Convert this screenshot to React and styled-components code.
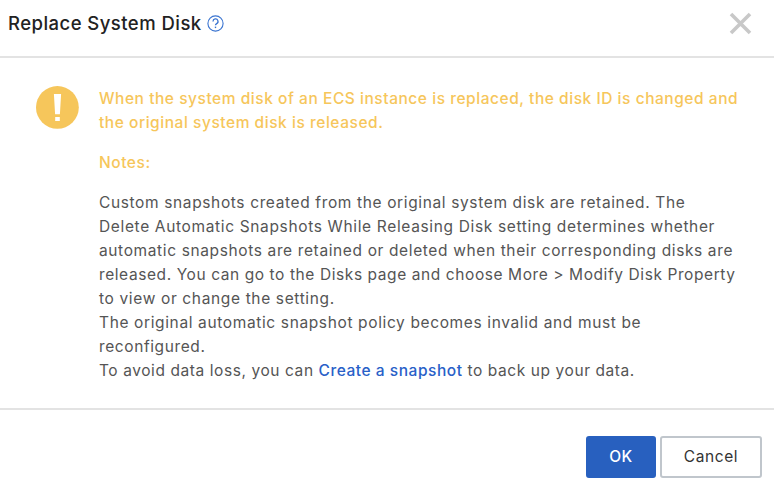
import React from "react";
import styled, { createGlobalStyle } from "styled-components";

const GlobalStyle = createGlobalStyle`
  * { box-sizing: border-box; }
  body { margin: 0; background: #fff; }
`;
const Dialog = styled.section`
  width: 774px;
  height: 500px;
  display: flex;
  flex-direction: column;
  background: #fff;
  font-family: Inter, sans-serif;
  font-size: 15.5px;
  line-height: 24px;
  color: #555;
`;
const Header = styled.header`
  height: 58px;
  flex: none;
  display: flex;
  justify-content: space-between;
  padding: 12px 22px 0 8px;
  border-bottom: 2px solid #e3e3e3;
`;
const TitleGroup = styled.div`
  display: flex;
  height: 22px;
  align-items: center;
  gap: 5px;
`;
const Title = styled.h1`
  margin: 0;
  font-size: 18.5px;
  line-height: 24px;
  font-weight: 500;
  letter-spacing: 0.46px;
  color: #222;
  white-space: nowrap;
`;
const IconButton = styled.button`
  display: flex;
  padding: 0;
  border: 0;
  background: none;
  align-self: flex-start;
`;
const HelpButton = styled(IconButton)`
  margin-top: 3px;
`;
const Content = styled.main`
  height: 352px;
  flex: none;
  display: flex;
  gap: 20px;
  padding: 28px 0 0 36px;
  border-bottom: 2px solid #e3e3e3;
`;
const Copy = styled.div`
  padding-top: 1px;
  white-space: nowrap;
`;
const Warning = styled.p`
  margin: 0 0 16px;
  font-weight: 500;
  color: #f6c65b;
  letter-spacing: 0.545px;
`;
const Line = styled.div`
  letter-spacing: ${(p) => p.$spacing}px;
`;
const Link = styled.a`
  color: #2860c8;
  font-weight: 500;
  letter-spacing: 0.54px;
  text-decoration: none;
`;
const Footer = styled.footer`
  display: flex;
  justify-content: flex-end;
  gap: 4px;
  padding: 26px 12px 0;
`;
const Button = styled.button`
  width: ${(p) => (p.$primary ? 70 : 102)}px;
  height: 42px;
  padding: 0;
  border: 2px solid ${(p) => (p.$primary ? "#2860bf" : "#c0c6cc")};
  border-radius: 3px;
  background: ${(p) => (p.$primary ? "#2860bf" : "#fff")};
  color: ${(p) => (p.$primary ? "#fff" : "#333")};
  font: ${(p) => (p.$primary ? 500 : 400)} 15.5px/24px Inter, sans-serif;
  letter-spacing: 0.6px;
`;

const WarningIcon = styled.svg`
  flex: none;
`;

const body = [
  ["Custom snapshots created from the original system disk are retained. The", 0.63],
  ["Delete Automatic Snapshots While Releasing Disk setting determines whether", 0.647],
  ["automatic snapshots are retained or deleted when their corresponding disks are", 0.626],
  ["released. You can go to the Disks page and choose More > Modify Disk Property", 0.585],
  ["to view or change the setting.", 0.64],
  ["The original automatic snapshot policy becomes invalid and must be", 0.63],
  ["reconfigured.", 0.6],
];

export default function App() {
  return (
    <>
      <GlobalStyle />
      <Dialog>
        <Header>
          <TitleGroup>
            <Title>Replace System Disk</Title>
            <HelpButton aria-label="Help">
              <svg width="17" height="17" viewBox="0 0 17 17" fill="none" stroke="#3a74d0">
                <circle cx="8.5" cy="8.5" r="7.6" strokeWidth="1.1" />
                <path d="M6 6.4a2.5 2.5 0 1 1 3.7 2.2c-.8.5-1.2.9-1.2 1.7" strokeWidth="1.3" />
                <path d="M8.5 11.6v1.5" strokeWidth="1.4" />
              </svg>
            </HelpButton>
          </TitleGroup>
          <IconButton aria-label="Close">
            <svg width="23" height="23" viewBox="0 0 23 23" stroke="#c8c8c8" strokeWidth="3.6">
              <path d="M2 2l19 19M21 2L2 21" />
            </svg>
          </IconButton>
        </Header>
        <Content>
          <WarningIcon width="43" height="43" viewBox="0 0 43 43">
            <circle cx="21.4" cy="21.4" r="21.4" fill="#f6c65b" />
            <path d="M17.9 8h7.2l-1.2 20.3h-4.8zM19.2 31h4.6v4h-4.6z" fill="#fff" />
          </WarningIcon>
          <Copy>
            <Warning>
              When the system disk of an ECS instance is replaced, the disk ID is changed and
              <br />
              the original system disk is released.
            </Warning>
            <Warning>Notes:</Warning>
            {body.map(([text, spacing]) => <Line key={text} $spacing={spacing}>{text}</Line>)}
            <Line $spacing={0.58}>To avoid data loss, you can <Link href="#">Create a snapshot</Link> to back up your data.</Line>
          </Copy>
        </Content>
        <Footer>
          <Button $primary>OK</Button>
          <Button>Cancel</Button>
        </Footer>
      </Dialog>
    </>
  );
}
